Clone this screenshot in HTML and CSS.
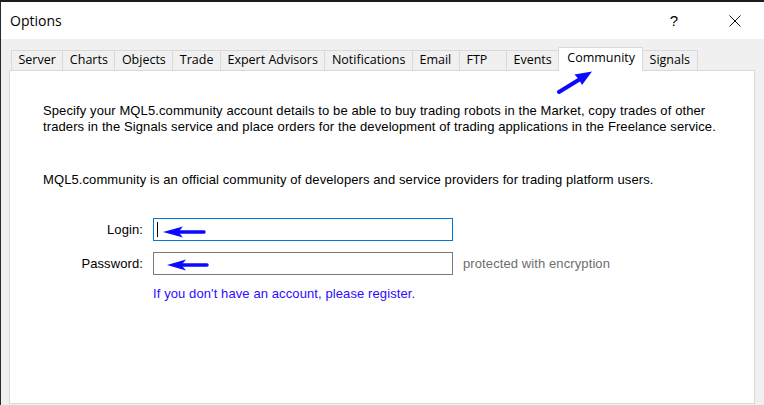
FILE: index.html
```html
<!DOCTYPE html>
<html lang="en">
<head>
    <meta charset="UTF-8">
    <meta name="viewport" content="width=device-width, initial-scale=1.0">
    <title>Options</title>
    <link rel="stylesheet" href="styles.css">
</head>
<body>
    <div class="window">
        <div class="titlebar">
            <span class="title">Options</span>
            <span class="help">?</span>
            <span class="close">
                <svg width="12" height="12" viewBox="0 0 12 12">
                    <path d="M0.5 0.5 L11.5 11.5 M11.5 0.5 L0.5 11.5" stroke="#111" stroke-width="1" fill="none"/>
                </svg>
            </span>
        </div>

        <div class="dialog">
            <div class="tabs">
                <div class="tab">Server</div>
                <div class="tab">Charts</div>
                <div class="tab">Objects</div>
                <div class="tab">Trade</div>
                <div class="tab">Expert Advisors</div>
                <div class="tab">Notifications</div>
                <div class="tab">Email</div>
                <div class="tab">FTP</div>
                <div class="tab">Events</div>
                <div class="tab active">Community</div>
                <div class="tab">Signals</div>
            </div>

            <div class="panel">
                <p class="intro">Specify your MQL5.community account details to be able to buy trading robots in the Market, copy trades of other traders in the Signals service and place orders for the development of trading applications in the Freelance service.</p>
                <p class="about">MQL5.community is an official community of developers and service providers for trading platform users.</p>

                <div class="form">
                    <label class="form-label" for="login">Login:</label>
                    <div class="field focused" id="login"><span class="caret"></span></div>
                    <span></span>

                    <label class="form-label" for="password">Password:</label>
                    <div class="field" id="password"></div>
                    <span class="note">protected with encryption</span>

                    <span></span>
                    <a class="register" href="#">If you don't have an account, please register.</a>
                </div>
            </div>
        </div>
    </div>

    <!-- annotation arrows drawn over the dialog -->
    <svg class="arrows" width="764" height="405" viewBox="0 0 764 405">
        <g fill="#0a0aff" stroke="#0a0aff">
            <line x1="559" y1="92" x2="581" y2="78.5" stroke-width="4" stroke-linecap="round"/>
            <polygon points="592,71.5 574.5,74.5 579,79.5 582,85" stroke="none"/>

            <line x1="176" y1="232" x2="204" y2="232" stroke-width="3.5" stroke-linecap="round"/>
            <polygon points="163,232 183,226.5 178.5,232 183,237.5" stroke="none"/>

            <line x1="180" y1="265" x2="207" y2="265" stroke-width="3.5" stroke-linecap="round"/>
            <polygon points="167,265 186,259.5 181.5,265 186,270.5" stroke="none"/>
        </g>
    </svg>
</body>
</html>
```

FILE: styles.css
```css
body {
    margin: 0;
    width: 764px;
    height: 405px;
    overflow: hidden;
    background: #f0f0f0;
    font-family: "Liberation Sans", Arial, sans-serif;
    color: #000;
    position: relative;
}

.window {
    height: 405px;
    box-sizing: border-box;
    border-top: 2px solid #1c1c1c;
    border-left: 1px solid #2a2a2a;
    display: flex;
    flex-direction: column;
}

/* title bar */
.titlebar {
    height: 37px;
    flex: none;
    background: #fff;
    display: flex;
    align-items: center;
    padding-left: 9px;
}

.title {
    font-family: "Open Sans", "Noto Sans", sans-serif;
    font-size: 14px;
    color: #000;
    flex: 1;
}

.help {
    font-family: "Liberation Sans", sans-serif;
    font-size: 15px;
    width: 12px;
    text-align: center;
    margin-right: 49px;
}

.close {
    display: flex;
    width: 12px;
    margin-right: 23px;
}

/* dialog body */
.dialog {
    flex: 1;
    display: flex;
    flex-direction: column;
    padding: 8px 9px 1px 8px;
}

.tabs {
    display: flex;
    align-items: flex-end;
    height: 23px;
    padding-left: 2px;
}

.tab {
    height: 20px;
    min-width: 48px;
    box-sizing: border-box;
    padding: 0 6.5px;
    margin-right: -1px;
    border: 1px solid #d9d9d9;
    border-bottom: none;
    background: #f0f0f0;
    font-family: "Open Sans", "Noto Sans", sans-serif;
    font-size: 12.5px;
    line-height: 18px;
    white-space: nowrap;
}

.tab.active {
    height: 24px;
    margin-bottom: -1px;
    background: #fff;
    line-height: 20px;
    padding: 0 7px 0 8px;
    position: relative;
    z-index: 1;
}

.panel {
    flex: 1;
    background: #fff;
    border: 1px solid #d9d9d9;
    padding: 32px 0 0 33px;
    font-size: 13px;
    line-height: 16px;
    letter-spacing: 0.1px;
}

.panel p {
    margin: 0;
}

.intro {
    width: 690px;
}

.about {
    margin-top: 37px !important;
}

/* login form */
.form {
    display: grid;
    grid-template-columns: 100px 300px auto;
    column-gap: 10px;
    row-gap: 11px;
    align-items: center;
    margin-top: 30px;
}

.form-label {
    text-align: right;
}

.field {
    height: 23px;
    box-sizing: border-box;
    border: 1px solid #7a7a7a;
    background: #fff;
    display: flex;
    align-items: center;
    padding-left: 3px;
}

.field.focused {
    border-color: #0078d7;
}

.caret {
    width: 1px;
    height: 15px;
    background: #000;
}

.note {
    color: #6d6d6d;
}

.register {
    color: #2a0cff;
    text-decoration: none;
}

.arrows {
    position: absolute;
    left: 0;
    top: 0;
    pointer-events: none;
}
```
